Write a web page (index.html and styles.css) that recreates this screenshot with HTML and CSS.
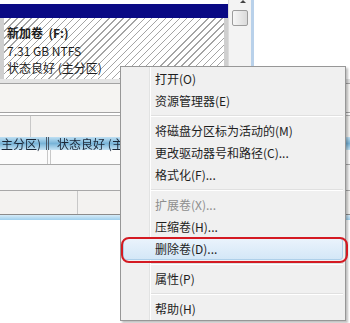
FILE: index.html
```html
<!DOCTYPE html>
<html lang="zh-CN">
<head>
    <meta charset="UTF-8">
    <title>磁盘管理</title>
    <link rel="stylesheet" href="styles.css">
</head>
<body>
    <div class="top">
        <div class="pane">
            <div class="cap"></div>
            <div class="hatch">
                <div class="vol-name">新加卷 &nbsp;(F:)</div>
                <div>7.31 GB NTFS</div>
                <div>状态良好 (主分区)</div>
            </div>
        </div>
        <div class="scroll">
            <div class="arrow"></div>
            <div class="thumb"></div>
        </div>
        <div class="edge"></div>
    </div>
    <div class="list">
        <div class="band"></div>
        <div class="row row1"></div>
        <div class="gap"></div>
        <div class="row row2"><div class="cell" style="width:30px"></div></div>
        <div class="sel">
            <span class="sel-a">主分区)</span>
            <span class="sel-b">状态良好 (主</span>
        </div>
        <div class="row row3"><div class="cell" style="width:47px"></div><div class="cell" style="width:2px"></div></div>
        <div class="row row4"></div>
        <div class="row row5"><div class="cell" style="width:77px"></div></div>
        <div class="strip"></div>
    </div>

    <div class="menu">
        <div class="item">打开(O)</div>
        <div class="item">资源管理器(E)</div>
        <div class="sep"></div>
        <div class="item">将磁盘分区标为活动的(M)</div>
        <div class="item">更改驱动器号和路径(C)...</div>
        <div class="item">格式化(F)...</div>
        <div class="sep"></div>
        <div class="item disabled">扩展卷(X)...</div>
        <div class="item">压缩卷(H)...</div>
        <div class="item hot">删除卷(D)...</div>
        <div class="sep"></div>
        <div class="item">属性(P)</div>
        <div class="sep"></div>
        <div class="item">帮助(H)</div>
    </div>
</body>
</html>
```

FILE: styles.css
```css
body {
    margin: 0;
    width: 350px;
    height: 323px;
    overflow: hidden;
    position: relative;
    background: #fff;
    font-family: "Noto Sans CJK SC", "Noto Sans", sans-serif;
    font-size: 12px;
    color: #1e1e1e;
}
.top {
    display: flex;
    height: 79px;
}
.pane {
    width: 228px;
    display: flex;
    flex-direction: column;
}
.cap {
    margin-top: 4px;
    height: 14px;
    background: #0a0a84;
}
.hatch {
    flex: 1;
    border-left: 4px solid #cfcfcf;
    border-right: 4px solid #cfcfcf;
    background: repeating-linear-gradient(135deg, #fff 0 4px, #a4a4a4 4px 5px);
    padding: 6px 0 0 3px;
    line-height: 17.5px;
}
.vol-name {
    font-weight: bold;
}
.scroll {
    width: 22px;
    background: #f3f3f3;
    border-left: 1px solid #dcdcdc;
    display: flex;
    flex-direction: column;
    align-items: center;
}
.arrow {
    width: 0;
    height: 0;
    border-left: 3px solid transparent;
    border-right: 3px solid transparent;
    border-bottom: 3px solid #444;
    margin-left: 6px;
}
.thumb {
    margin-top: 7px;
    width: 14px;
    height: 14px;
    border: 1px solid #9c9c9c;
    border-radius: 2px;
    background: linear-gradient(90deg, #f6f6f6, #dadada);
}
.edge {
    width: 3px;
    background: #b9d1ea;
}
.band {
    height: 4px;
    background: #e4e4e4;
    border-bottom: 1px solid #a3a3a3;
}
.row {
    display: flex;
}
.cell {
    border-right: 1px solid #c8c8c8;
}
.row1 {
    height: 28px;
    background: #f5f4f2;
    border-bottom: 1px solid #a3a3a3;
}
.gap {
    height: 2px;
    background: #fff;
    border-bottom: 1px solid #b4b4b4;
}
.row2 {
    height: 21px;
    background: #f3f2f0;
}
.sel {
    height: 13px;
    background: linear-gradient(#bfe0f3, #78b4d8 50%, #c6e4f5);
    display: flex;
    align-items: center;
    line-height: 13px;
    white-space: nowrap;
    filter: blur(0.6px);
    color: #1c2838;
}
.sel-a {
    padding-left: 1px;
    width: 45px;
    border-right: 3px double #4a5a6a;
}
.sel-b {
    margin-left: 8px;
}
.row3 {
    height: 14px;
    background: #fbfbfb;
    border-bottom: 1px solid #a8a8a8;
}
.row4 {
    height: 25px;
    background: #f4f4f4;
    border-bottom: 1px solid #a8a8a8;
}
.row5 {
    height: 23px;
    background: #f3f2f0;
    border-bottom: 1px solid #8c8c8c;
}
.strip {
    height: 5px;
    background: linear-gradient(#d6ecf8, #9fd0ee);
}
.menu {
    position: absolute;
    left: 120px;
    top: 66px;
    width: 226px;
    height: 255px;
    box-sizing: border-box;
    border: 1px solid #979797;
    padding-top: 1px;
    background: linear-gradient(90deg, #f0f0f0 0 28px, #e2e3e3 28px 29px, #fff 29px 30px, #f0f0f0 30px);
    box-shadow: 2px 2px 2px rgba(0, 0, 0, 0.25);
}
.item {
    height: 22px;
    line-height: 22px;
    padding-left: 34px;
    white-space: nowrap;
}
.item.disabled {
    color: #8e8e8e;
}
.item.hot {
    position: relative;
    margin: 0 2px;
    padding-left: 31px;
    height: 20px;
    line-height: 20px;
    border: 1px solid #aecfe9;
    border-radius: 3px;
    background: linear-gradient(#eaf3fc, #d4e7f7);
}
.item.hot::after {
    content: "";
    position: absolute;
    left: -3px;
    right: -6px;
    top: -2px;
    bottom: -4px;
    border: 2px solid #d41a22;
    border-radius: 8px;
}
.sep {
    height: 8px;
    display: flex;
    align-items: center;
    padding-left: 30px;
}
.sep::after {
    content: "";
    flex: 1;
    margin-right: 2px;
    border-top: 1px solid #e0e0e0;
    border-bottom: 1px solid #fff;
}
```
